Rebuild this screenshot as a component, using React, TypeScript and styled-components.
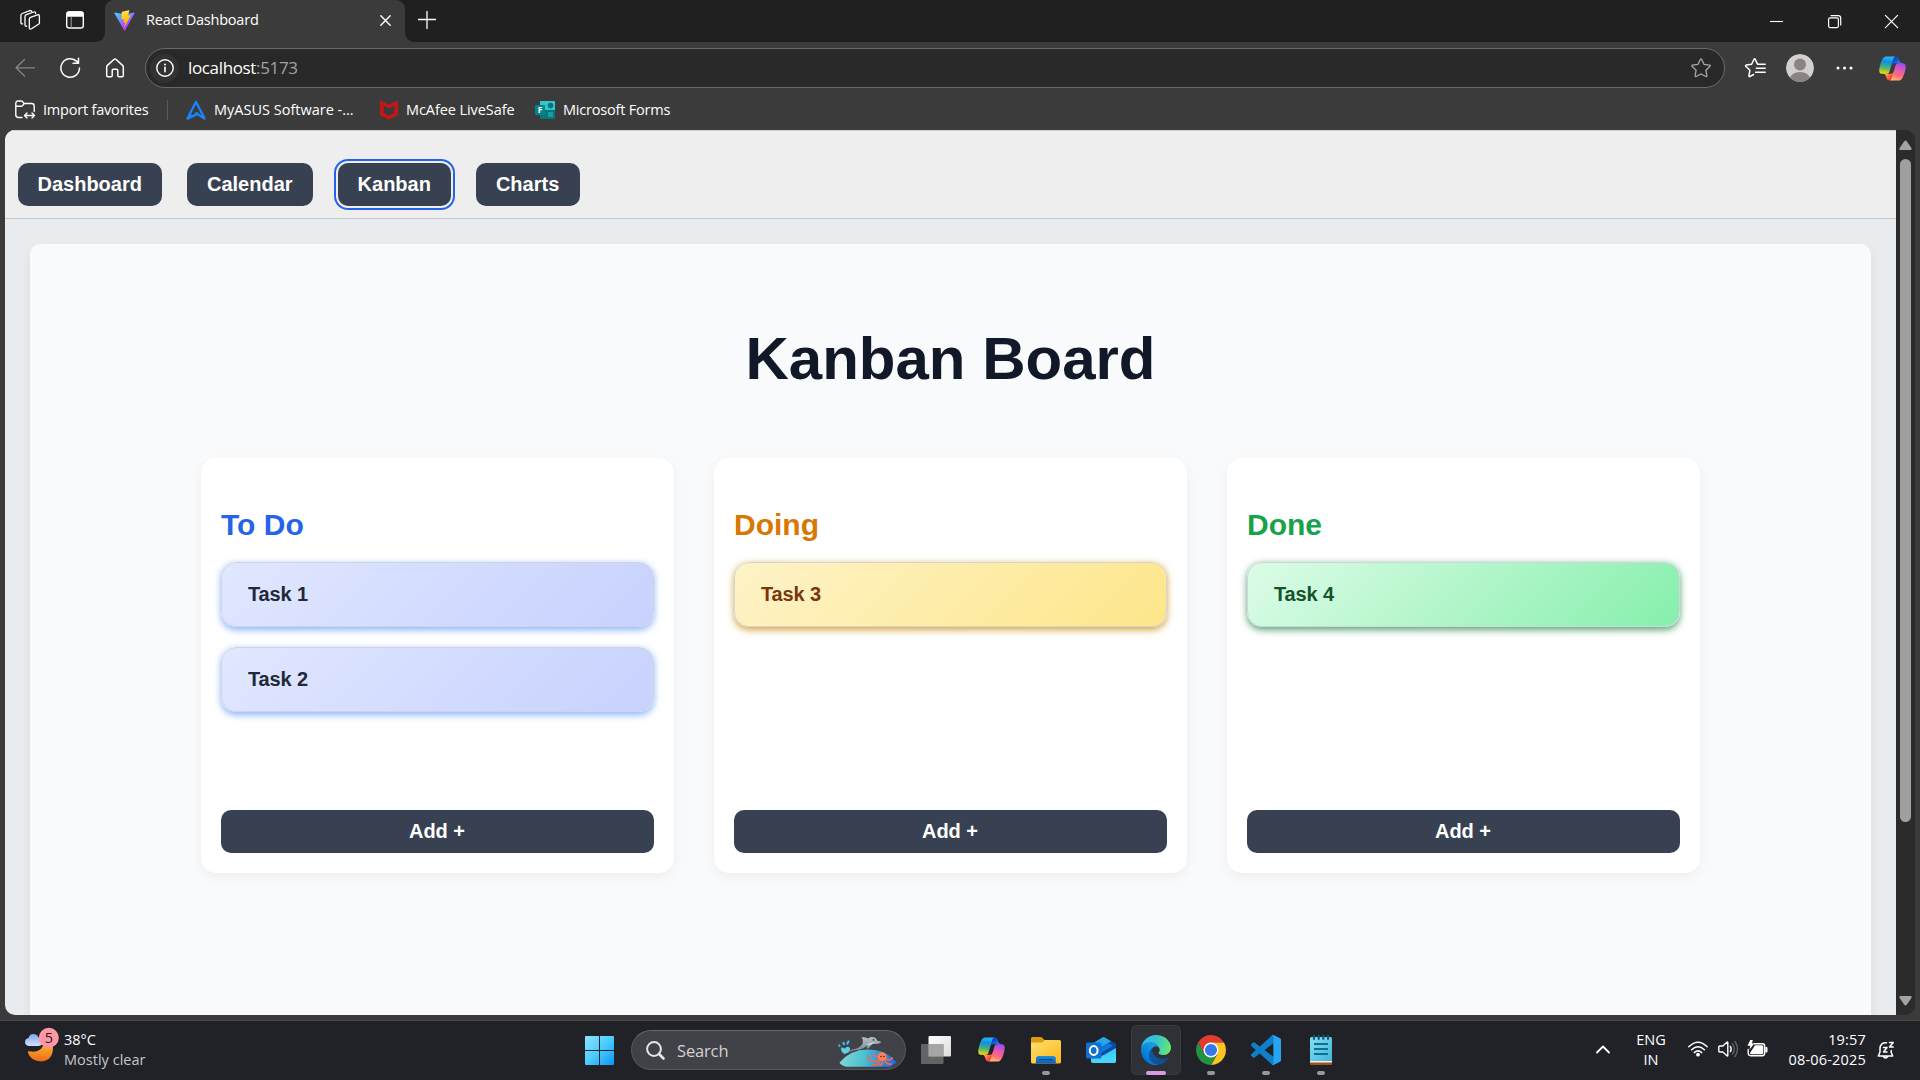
import React from "react";
import styled, { createGlobalStyle } from "styled-components";

const UI_FONT = `"Open Sans", "Noto Sans", sans-serif`;
const PAGE_FONT = `"Liberation Sans", Arial, sans-serif`;

const GlobalStyle = createGlobalStyle`
  *, *::before, *::after { box-sizing: border-box; }
  html, body { margin: 0; padding: 0; background: #3b3b3b; }
  body { width: 1920px; height: 1080px; overflow: hidden; }
  svg { display: block; flex: none; overflow: visible; }
`;

const Desktop = styled.div`
  width: 1920px;
  height: 1080px;
  display: flex;
  flex-direction: column;
  font-family: ${UI_FONT};
  color: #fff;
`;

/* ---------- Browser chrome ---------- */

const Browser = styled.div`
  height: 1021px;
  display: flex;
  flex-direction: column;
  background: #3b3b3b;
  border-bottom: 1px solid #484848;
`;

const TabStrip = styled.div`
  height: 42px;
  display: flex;
  background: #202020;
`;

const StripActions = styled.div`
  width: 105px;
  height: 42px;
  padding: 10px 0 0 20px;
  display: flex;
  gap: 25px;
  background: #202020;
  border-bottom-right-radius: 9px;
`;

const TabBacking = styled.div<{ $grow?: boolean }>`
  flex: ${(p) => (p.$grow ? "1" : "none")};
  display: flex;
  background: #3b3b3b;
`;

const TabCorners = styled.div`
  background: #202020;
`;

const Tab = styled.div`
  width: 300px;
  height: 42px;
  padding: 0 14px 2px 9px;
  display: flex;
  align-items: center;
  background: #3b3b3b;
  border-radius: 9px 9px 0 0;
`;

const TabTitle = styled.span`
  flex: 1;
  margin-left: 11px;
  font-size: 14.5px;
  letter-spacing: -0.22px;
  line-height: 20px;
  white-space: nowrap;
`;

const StripRest = styled.div`
  flex: 1;
  height: 42px;
  padding: 11px 22px 0 13px;
  display: flex;
  justify-content: space-between;
  background: #202020;
  border-bottom-left-radius: 9px;
`;

const WindowControls = styled.div`
  display: flex;
  gap: 44.5px;
  padding-top: 4px;
`;

const Toolbar = styled.div`
  height: 52px;
  padding: 6px 13px 0 14px;
  display: flex;
  align-items: flex-start;
`;

const NavIcons = styled.div`
  width: 131px;
  height: 40px;
  display: flex;
  align-items: center;
  gap: 23.5px;
`;

const AddressBar = styled.div`
  width: 1580px;
  height: 40px;
  padding: 0 13px 0 5px;
  display: flex;
  align-items: center;
  background: #292929;
  border: 1px solid #6a6a6a;
  border-radius: 20px;
`;

const InfoBadge = styled.span`
  width: 29px;
  height: 29px;
  display: grid;
  place-items: center;
  background: #323232;
  border-radius: 50%;
  margin-left: -1px;
`;

const Url = styled.span`
  flex: 1;
  margin-left: 9px;
  font-size: 17px;
  letter-spacing: -0.35px;
  line-height: 24px;
`;

const Port = styled.span`
  color: #a3a3a3;
`;

const ToolbarRight = styled.div`
  flex: 1;
  height: 40px;
  padding-left: 20px;
  display: grid;
  grid-template-columns: 41px 50px 42px 29px;
  align-items: center;
`;

const FavoritesBar = styled.div`
  height: 36px;
  padding: 1px 0 5px 15px;
  display: flex;
  align-items: center;
`;

const Favorite = styled.span<{ $width: number; $gap: number; $track: number }>`
  width: ${(p) => p.$width}px;
  display: flex;
  align-items: center;
  gap: ${(p) => p.$gap}px;
  font-size: 14.5px;
  letter-spacing: ${(p) => p.$track}px;
  line-height: 20px;
  white-space: nowrap;
`;

const Divider = styled.span`
  width: 1px;
  height: 20px;
  margin-right: 18px;
  background: #5a5a5a;
`;

/* ---------- Page viewport ---------- */

const Viewport = styled.div`
  width: 1910px;
  height: 885px;
  margin-left: 5px;
  display: flex;
  overflow: hidden;
  border-radius: 10px;
  background: #2b2b2b;
`;

const Page = styled.div`
  width: 1891px;
  height: 885px;
  overflow: hidden;
  background: #e8ecef;
  font-family: ${PAGE_FONT};
`;

const PageNav = styled.nav`
  height: 89px;
  padding: 32px 13px 0;
  display: flex;
  gap: 25px;
  background: #eee;
  border-top: 1px solid #cfcfcf;
  border-bottom: 1px solid #c8c9ca;
`;

const DarkButton = styled.button<{ $focused?: boolean }>`
  height: 43px;
  padding: 0 20.5px 0 19.5px;
  border: 0;
  border-radius: 10px;
  background: #374151;
  color: #fff;
  font: 600 20px/23px ${PAGE_FONT};
  outline: ${(p) => (p.$focused ? "2px solid #2563eb" : "none")};
  outline-offset: 2px;
`;

const Panel = styled.main`
  height: 900px;
  margin: 25px 25px 0;
  padding: 80px 170px 0;
  display: flex;
  flex-direction: column;
  align-items: center;
  background: #f9fafc;
  border-radius: 10px;
  box-shadow: 0 4px 12px rgba(0, 0, 0, 0.05);
`;

const Title = styled.h1`
  margin: 0 0 65px;
  font-size: 60px;
  line-height: 69px;
  font-weight: 700;
  color: #111827;
`;

const Board = styled.div`
  width: 1499px;
  display: grid;
  grid-template-columns: repeat(3, 473px);
  gap: 40px;
`;

const Column = styled.section`
  height: 415px;
  padding: 49px 20px 20px;
  display: flex;
  flex-direction: column;
  background: #fff;
  border-radius: 15px;
  box-shadow: 0 4px 12px rgba(0, 0, 0, 0.05);
`;

const ColumnTitle = styled.h2<{ $color: string }>`
  margin: 0 0 19px;
  font-size: 30px;
  line-height: 36px;
  font-weight: 600;
  color: ${(p) => p.$color};
`;

const TaskList = styled.div`
  flex: 1;
  display: flex;
  flex-direction: column;
  gap: 20px;
`;

const Task = styled.div<{ $from: string; $to: string; $ink: string; $glow: string }>`
  height: 65px;
  padding: 0 26px 1px;
  display: flex;
  align-items: center;
  font-size: 20px;
  letter-spacing: -0.15px;
  font-weight: 600;
  color: ${(p) => p.$ink};
  background: linear-gradient(135deg, ${(p) => p.$from}, ${(p) => p.$to});
  border: 1px solid #d1d5db;
  border-radius: 15px;
  box-shadow: 0 2.5px 7.5px ${(p) => p.$glow};
`;

const Scrollbar = styled.div`
  width: 19px;
  height: 885px;
  padding: 10px 3px 9px;
  display: flex;
  flex-direction: column;
  align-items: center;
  background: #2b2b2b;
`;

const Thumb = styled.div`
  width: 11px;
  height: 663px;
  margin-top: 9px;
  margin-bottom: auto;
  border-radius: 6px;
  background: #9f9f9f;
`;

/* ---------- Taskbar ---------- */

const Taskbar = styled.footer`
  height: 59px;
  display: flex;
  background: #202228;
`;

const Weather = styled.div`
  width: 574px;
  padding: 9px 0 0 25px;
  display: flex;
  gap: 9px;
`;

const WeatherText = styled.div`
  display: flex;
  flex-direction: column;
  font-size: 14.5px;
  letter-spacing: 0.02px;
  line-height: 20px;
  color: #c6c7c9;
`;

const Temperature = styled.span`
  color: #fff;
`;

const AppRow = styled.div`
  height: 59px;
  padding-top: 4px;
  display: flex;
  gap: 5px;
`;

const AppTile = styled.div<{ $active?: boolean; $top?: number }>`
  width: 50px;
  height: 50px;
  padding-top: ${(p) => p.$top ?? 10}px;
  display: flex;
  flex-direction: column;
  align-items: center;
  justify-content: space-between;
  border-radius: 6px;
  background: ${(p) => (p.$active ? "#2f3137" : "transparent")};
  box-shadow: ${(p) => (p.$active ? "inset 0 0 0 1px #393b41" : "none")};
`;

const Running = styled.span<{ $active?: boolean }>`
  width: ${(p) => (p.$active ? 20 : 8)}px;
  height: 4px;
  border-radius: 2px;
  background: ${(p) => (p.$active ? "#d79be2" : "#97989b")};
`;

const SearchBox = styled.div`
  width: 275px;
  height: 40px;
  margin: 5px 0 0 2px;
  padding: 0 8px 0 14px;
  display: flex;
  align-items: center;
  border: 1px solid #55565b;
  border-top-color: #66676c;
  border-radius: 20px;
  background: #414247;
`;

const SearchLabel = styled.span`
  flex: 1;
  margin: 1px 0 0 12px;
  font-size: 16.5px;
  letter-spacing: -0.15px;
  line-height: 24px;
  color: #d2d2d4;
`;

const SearchHighlight = styled.span`
  padding-top: 4px;
`;

const Tray = styled.div`
  margin-left: auto;
  padding-right: 25px;
  display: flex;
  align-items: flex-start;
`;

const TrayIcons = styled.div`
  width: 80px;
  margin: 19px 1px 0 10px;
  display: flex;
  align-items: center;
  justify-content: space-between;
`;

const TrayText = styled.div`
  padding-top: 9px;
  display: flex;
  flex-direction: column;
  font-size: 14.5px;
  line-height: 20px;
  white-space: nowrap;
`;

const Language = styled(TrayText)`
  width: 54px;
  margin-left: 14px;
  text-align: center;
`;

const Clock = styled(TrayText)`
  width: 97px;
  text-align: right;
  letter-spacing: 0.18px;
`;

const ChevronSlot = styled.div`
  padding-top: 24px;
`;

const BellSlot = styled.div`
  padding: 20px 0 0 11px;
`;

/* ---------- Icons ---------- */

const stroke = {
  fill: "none",
  stroke: "#fff",
  strokeWidth: 1.4,
  strokeLinecap: "round" as const,
  strokeLinejoin: "round" as const,
};

const WorkspacesIcon = () => (
  <svg width="20" height="20" viewBox="0 0 20 20" {...stroke} strokeWidth={1.3}>
    <path d="M9.300 9.200q0-1.300 1.200-1.800l7-2.600q1.900-.5 1.900 1.300v6.600q0 1-.9 1.600l-7 4.400q-2.200 1.200-2.200-1.100z" />
    <path d="M15.600 3.600V3q-.2-1.500-1.800-1L6.300 4.600Q5 5.100 5 6.400v8.400q.1 1.700 1.700 1.400" />
    <path d="M11.800 1.500Q11.300.2 9.800.7L2.200 3.500Q.9 4 .9 5.300v7.300Q1 14.200 2.600 13.900" />
  </svg>
);

const PaneIcon = () => (
  <svg width="20" height="20" viewBox="0 0 20 20">
    <rect x="1.700" y="2" width="16.600" height="16" rx="2.600" {...stroke} />
    <path d="M1.300 6.800V4.200Q1.300 1.300 4.200 1.300h11.600q2.900 0 2.900 2.900v2.600z" fill="#fff" />
    <path d="M6.200 7v10.500" stroke="#8d8d8d" strokeWidth="1.200" />
  </svg>
);

const ViteIcon = () => (
  <svg width="21" height="21" viewBox="1.500 1.500 29 29">
    <defs>
      <linearGradient id="viteA" x1="6" x2="20" y1="3" y2="26" gradientUnits="userSpaceOnUse">
        <stop stopColor="#41d1ff" />
        <stop offset="1" stopColor="#bd34fe" />
      </linearGradient>
      <linearGradient id="viteB" x1="17" x2="20" y1="3" y2="22" gradientUnits="userSpaceOnUse">
        <stop stopColor="#ffea83" />
        <stop offset=".1" stopColor="#ffdd35" />
        <stop offset="1" stopColor="#ffa800" />
      </linearGradient>
    </defs>
    <path fill="url(#viteA)" d="M29.8836 6.146L16.7418 29.6457c-.2714.4851-.9684.488-1.2439.0052L2.0956 6.1482c-.3-.5262.1498-1.1635.746-1.057l13.156 2.3516a.7144.7144 0 0 0 .2537-.0004l12.8808-2.3478c.5942-.1083 1.0463.5241.7515 1.0513Z" />
    <path fill="url(#viteB)" d="M22.2644 2.0069l-9.7253 1.9056a.3571.3571 0 0 0-.2879.3294l-.5982 10.1038c-.014.238.2045.4227.4367.3691l2.7077-.6248c.2534-.0585.4823.1647.4302.4194l-.8044 3.9393c-.0542.265.1947.4918.4536.4132l1.6724-.5082c.2593-.0787.5084.1487.4536.414l-1.2784 6.1877c-.08.387.4348.598.6495.2662L16.900 24 24.442 9.1848c.1327-.2648-.096-.5667-.387-.5106l-2.787.5379c-.262.0505-.4849-.1934-.4109-.4497l1.8191-6.306c.0741-.2568-.1496-.5009-.4118-.4495Z" />
  </svg>
);

const CloseTabIcon = () => (
  <svg width="11" height="11" viewBox="0 0 11 11" {...stroke}>
    <path d="M.8.8l9.400 9.400M10.200.8L.8 10.200" />
  </svg>
);

const PlusIcon = () => (
  <svg width="18" height="18" viewBox="0 0 18 18" {...stroke} strokeWidth={1.300}>
    <path d="M9 .5v17M.5 8.500h17" />
  </svg>
);

const MinimizeIcon = () => (
  <svg width="13" height="13" viewBox="0 0 13 13">
    <path d="M0 6.500h13" stroke="#fff" strokeWidth="1.100" />
  </svg>
);

const RestoreIcon = () => (
  <svg width="13" height="13" viewBox="0 0 13 13" {...stroke} strokeWidth={1.200}>
    <rect x=".6" y="2.800" width="9.800" height="9.800" rx="1.500" />
    <path d="M3 .6h7.200q2.500 0 2.500 2.500V10" />
  </svg>
);

const CloseWindowIcon = () => (
  <svg width="13" height="13" viewBox="0 0 13 13" {...stroke} strokeWidth={1.200}>
    <path d="M.4.4l12.200 12.200M12.600.4L.4 12.600" />
  </svg>
);

const BackIcon = () => (
  <svg width="22" height="20" viewBox="0 0 22 20" {...stroke} stroke="#858585" strokeWidth={1.300}>
    <path d="M10.500 1.500L2 9.800 10.500 18M2 9.800h18.500" />
  </svg>
);

const RefreshIcon = () => (
  <svg width="22" height="22" viewBox="0 0 22 22" {...stroke} strokeWidth={1.500}>
    <path d="M19.500 11A9.300 9.300 0 1 1 16.800 4.400L18.300 5.900M18.500 1.200v5h-5.400" />
  </svg>
);

const HomeIcon = () => (
  <svg width="20" height="20" viewBox="0 0 20 20" {...stroke} strokeWidth={1.500}>
    <path d="M1.700 8.900q0-.9.700-1.500L8.900 1.500q1.100-.9 2.200 0l6.500 5.900q.7.600.7 1.500v8.600q0 1.300-1.300 1.300h-3q-1.200 0-1.200-1.300v-5q0-1.200-1.200-1.200H8.400q-1.200 0-1.200 1.200v5q0 1.300-1.200 1.300H3q-1.300 0-1.300-1.300z" />
  </svg>
);

const InfoIcon = () => (
  <svg width="18" height="18" viewBox="0 0 18 18" {...stroke}>
    <circle cx="9" cy="9" r="8.200" />
    <path d="M9 8.200v4.500" strokeWidth="1.600" />
    <circle cx="9" cy="5.500" r="1" fill="#fff" stroke="none" />
  </svg>
);

const StarIcon = () => (
  <svg width="20" height="20" viewBox="0 0 20 20" {...stroke} stroke="#a9a9a9" strokeWidth={1.300}>
    <path d="M9.400 1.300q.6-.9 1.200 0l2.400 5 5.600.8q1 .3.400 1.100l-4.100 4 1 5.600q0 1.100-1 .7L10 16l-4.900 2.500q-1 .4-1-.7l1-5.600L1 8.200q-.6-.8.400-1.100L7 6.300z" />
  </svg>
);

const FavoritesIcon = () => (
  <svg width="21" height="20" viewBox="0 0 21 20" {...stroke} strokeWidth={1.500}>
    <path d="M12.600 6.200L10.200 1.300q-.6-.9-1.200 0l-2.400 5L1.200 7.100q-1 .3-.4 1.100l4.100 4-1 5.600q0 1.100 1 .7L8.600 16.500" />
    <path d="M12.800 6.300h7.400M11.400 10.300h8.800M10.600 14.300h9.600" />
  </svg>
);

const AvatarIcon = () => (
  <svg width="28" height="28" viewBox="0 0 28 28">
    <defs>
      <clipPath id="avatarClip">
        <circle cx="14" cy="14" r="14" />
      </clipPath>
    </defs>
    <g clipPath="url(#avatarClip)">
      <circle cx="14" cy="14" r="14" fill="#d2d0ce" />
      <circle cx="14" cy="10.500" r="6" fill="#8a8582" />
      <ellipse cx="14" cy="26" rx="10.500" ry="8" fill="#8a8582" />
    </g>
  </svg>
);

const MoreIcon = () => (
  <svg width="17" height="4" viewBox="0 0 17 4" fill="#fff">
    <circle cx="2" cy="2" r="1.500" />
    <circle cx="8.500" cy="2" r="1.500" />
    <circle cx="15" cy="2" r="1.500" />
  </svg>
);

const CopilotIcon = ({ id }: { id: string }) => (
  <svg width="29" height="29" viewBox="0 0 48 48">
    <defs>
      <linearGradient id={`${id}a`} x1="34" y1="18" x2="26" y2="5" gradientUnits="userSpaceOnUse">
        <stop stopColor="#1aa2ee" />
        <stop offset=".5" stopColor="#1557d8" />
        <stop offset="1" stopColor="#0d3fb8" />
      </linearGradient>
      <linearGradient id={`${id}b`} x1="12" y1="32" x2="24" y2="44" gradientUnits="userSpaceOnUse">
        <stop stopColor="#ffb657" />
        <stop offset=".5" stopColor="#ff5f3d" />
        <stop offset="1" stopColor="#d8323c" />
      </linearGradient>
      <linearGradient id={`${id}c`} x1="14" y1="4" x2="10" y2="33" gradientUnits="userSpaceOnUse">
        <stop stopColor="#2fb5f4" />
        <stop offset=".3" stopColor="#0d91e1" />
        <stop offset=".65" stopColor="#52b471" />
        <stop offset="1" stopColor="#ffdc00" />
      </linearGradient>
      <linearGradient id={`${id}d`} x1="40" y1="14" x2="30" y2="44" gradientUnits="userSpaceOnUse">
        <stop stopColor="#8c48ff" />
        <stop offset=".4" stopColor="#e256b8" />
        <stop offset=".72" stopColor="#ff6c7c" />
        <stop offset="1" stopColor="#ffb66b" />
      </linearGradient>
    </defs>
    <path fill={`url(#${id}a)`} d="M34.142 7.325A4.630 4.630 0 0 0 29.700 4h-1.350a4.630 4.630 0 0 0-4.554 3.794L21.480 20.407l.575-1.965a4.630 4.630 0 0 1 4.444-3.330h7.853l3.294 1.282 3.175-1.283h-.926a4.630 4.630 0 0 1-4.443-3.325z" />
    <path fill={`url(#${id}b)`} d="M14.330 40.656A4.630 4.630 0 0 0 18.779 44h2.870a4.630 4.630 0 0 0 4.629-4.510l.312-12.163-.654 2.233a4.630 4.630 0 0 1-4.443 3.329h-7.919l-2.823-1.532-3.057 1.532h.912a4.630 4.630 0 0 1 4.447 3.344z" />
    <path fill={`url(#${id}c)`} d="M29.500 4H13.460c-4.583 0-7.332 6.057-9.165 12.113-2.172 7.176-5.015 16.772 3.208 16.772h6.926c2.079 0 3.904-1.375 4.475-3.373 1.210-4.235 3.330-11.620 4.996-17.244.846-2.858 1.551-5.313 2.633-6.842C27.140 4.570 28.150 4 29.500 4" />
    <path fill={`url(#${id}d)`} d="M18.498 44h16.040c4.582 0 7.332-6.058 9.165-12.115 2.171-7.177 5.014-16.775-3.208-16.775h-6.926c-2.080 0-3.905 1.376-4.475 3.374-1.210 4.236-3.330 11.622-4.996 17.247-.847 2.859-1.552 5.314-2.634 6.843C20.857 43.431 19.848 44 18.498 44" />
  </svg>
);

const ImportIcon = () => (
  <svg width="20" height="20" viewBox="0 0 20 20" {...stroke} strokeWidth={1.400}>
    <path d="M7 17.500H3.400Q.8 17.500.8 14.800V3.500Q.8 1 3.100 1h3.200q.8 0 1.300.6l1.500 1.900h7.500q2.600 0 2.600 2.700V11.500" />
    <path d="M1 6.200h5.300q.8 0 1.300-.6l1.500-2" />
    <path d="M9.700 15.500h9.300M12 13l-2.500 2.500L12 18M17 13l2.500 2.500L17 18" />
  </svg>
);

const AsusIcon = () => (
  <svg width="20" height="20" viewBox="0 0 20 20" fill="none" stroke="#1a84fb" strokeWidth="2.300" strokeLinejoin="round">
    <path d="M5.200 14.200L1.500 18.600 10 1.800l8.500 16.800L9.200 12.600" />
    <path d="M1.500 18.600l11.200-5.200" />
  </svg>
);

const McAfeeIcon = () => (
  <svg width="18" height="20" viewBox="0 0 18 20">
    <path fill="#c01818" fillRule="evenodd" d="M0 .3l9 4.200 9-4.200v14.900l-9 4.600-9-4.600zM3.800 5.800v7.100L9 15.600l5.200-2.700V5.800L9 8.400z" />
  </svg>
);

const FormsIcon = () => (
  <svg width="20" height="18" viewBox="0 0 20 18">
    <rect x="5" y="0" width="15" height="18" rx="1" fill="#03787c" />
    <path d="M6 0h13q1 0 1 1v8H5V1q0-1 1-1z" fill="#36c5cc" />
    <circle cx="15.500" cy="4.600" r="2.800" fill="#03787c" />
    <rect x="13" y="11" width="5" height="5" fill="#1a9ba1" />
    <rect x="0" y="4" width="10" height="10" rx="1" fill="#02848a" />
    <text x="5" y="12" textAnchor="middle" fontFamily="Open Sans" fontWeight="700" fontSize="8.500" letterSpacing="0" fill="#fff">F</text>
  </svg>
);

const ArrowIcon = ({ down }: { down?: boolean }) => (
  <svg width="13" height="10" viewBox="0 0 13 10">
    <path
      transform={down ? "rotate(180 6.500 5)" : undefined}
      d="M5.300 1.200q1.200-1.600 2.400 0l4.700 6.700q.9 2-.8 2H1.400q-1.700 0-.8-2z"
      fill="#a3a3a3"
    />
  </svg>
);

const WeatherIcon = () => (
  <svg width="30" height="38" viewBox="0 0 30 38">
    <defs>
      <linearGradient id="moon" x1="0" y1="0" x2="0" y2="1">
        <stop stopColor="#ffc23c" />
        <stop offset="1" stopColor="#ee6a14" />
      </linearGradient>
      <linearGradient id="cloud" x1="0" y1="0" x2="0" y2="1">
        <stop stopColor="#7ea6ef" />
        <stop offset="1" stopColor="#d3e0fb" />
      </linearGradient>
    </defs>
    <path d="M2.900 22.500q-.3-1.500 1.200-1.200 8 1.700 12.500-3 2.500-3 2.400-7.500l2.500.2Q27.800 12 28 18.500 27.500 30.500 16.500 31.500 5.500 31.200 2.900 22.500z" fill="url(#moon)" />
    <path d="M4 16q-4-.4-4-4 .2-3.400 3.600-4Q4.500 4 8.500 4q3.700.1 5 3.500 4 .4 4.500 4-.2 4.200-4.500 4.500z" fill="url(#cloud)" />
    <circle cx="23.800" cy="7.700" r="10" fill="#ff96a4" />
    <text x="23.800" y="13" textAnchor="middle" fontFamily="Open Sans" fontSize="14.500" fill="#222">5</text>
  </svg>
);

const StartIcon = () => (
  <svg width="29" height="29" viewBox="0 0 29 29">
    <defs>
      <linearGradient id="win" x1="0" y1="0" x2="29" y2="29" gradientUnits="userSpaceOnUse">
        <stop stopColor="#8fe3ff" />
        <stop offset=".5" stopColor="#4accfd" />
        <stop offset="1" stopColor="#0b95f8" />
      </linearGradient>
    </defs>
    <path fill="url(#win)" d="M1 0h13v14H0V1q0-1 1-1zM15 0h13q1 0 1 1v13H15zM0 15h14v14H1q-1 0-1-1zM15 15h14v13q0 1-1 1H15z" />
  </svg>
);

const SearchIcon = () => (
  <svg width="19" height="19" viewBox="0 0 19 19" fill="none" stroke="#e6e6e8" strokeWidth="2" strokeLinecap="round">
    <circle cx="8" cy="8" r="6.900" />
    <path d="M13 13l4.500 4.500" strokeWidth="2.600" />
  </svg>
);

const DolphinIcon = () => (
  <svg width="60" height="32" viewBox="0 0 60 32">
    <defs>
      <linearGradient id="sea" x1="0" y1="0" x2="60" y2="10" gradientUnits="userSpaceOnUse">
        <stop stopColor="#8fded8" />
        <stop offset=".5" stopColor="#4cc0cf" />
        <stop offset=".8" stopColor="#2a88e4" />
        <stop offset="1" stopColor="#1f70e6" />
      </linearGradient>
      <linearGradient id="skin" x1="0" y1="0" x2="0" y2="1">
        <stop stopColor="#b4c2c6" />
        <stop offset="1" stopColor="#6f858c" />
      </linearGradient>
    </defs>
    <path d="M2.500 26.500Q14 13.500 30 13.500 49 13.500 59.500 26.500L53 30.800H9Q4 29.500 2.500 26.500z" fill="url(#sea)" />
    <path d="M2.200 9.500l.2.200M5 12.500l.2.200M11.500 5.500l-1.200 2M6.500 7l.5 1.200" stroke="#36bfe4" strokeWidth="2.200" strokeLinecap="round" />
    <path d="M4 14q1.500-3.500 4-1.300Q10 9 13 12q.8 4.500-5.500 6Q4.500 16.500 4 14z" fill="#5bd0ea" />
    <path d="M11 16.800q1-3 5-3.600 6-.4 9.500-5.200Q26.500 3.200 24.500 1.300q4-.6 6.200 1.200Q34-.2 37.600 1.600q2.300 1.200 2.400 3l4 1.200q.4 1.200-1.500 1.400-4 1.200-7.500.8-1.500 3.600-5 5-.2-2 0-3.600-4.500 4.300-11.500 4.600-4 .4-7.500 2.800z" fill="url(#skin)" />
    <path d="M29.500 8q5-.2 8.500-2.200l-3 2.500q-4 .9-5.500-.3z" fill="#dfe8ea" />
    <circle cx="36.500" cy="3.900" r=".8" fill="#233" />
    <path d="M42.500 23q-4.500 4-9 1.500-3.500-1.500-2.500-4.500M43 25q-3 5-7 4M45.500 24q.5 4.500-2.500 5M48 24q1 4.500 6 4M49 22.500q4 3 6-.5M41.500 21.500q-3-2.500-5.500-2" fill="none" stroke="#f0694c" strokeWidth="1.800" strokeLinecap="round" />
    <ellipse cx="45.300" cy="20.500" rx="4.300" ry="4.300" fill="#ff8058" />
    <circle cx="44" cy="20.500" r=".8" fill="#5a1f1f" />
    <circle cx="47" cy="20.500" r=".8" fill="#5a1f1f" />
  </svg>
);

const TaskViewIcon = () => (
  <svg width="30" height="30" viewBox="0 0 30 30">
    <defs>
      <linearGradient id="tv" x1="0" y1="0" x2="1" y2="1">
        <stop stopColor="#fff" />
        <stop offset="1" stopColor="#dcdcdc" />
      </linearGradient>
    </defs>
    <rect x="7.500" y="1" width="22.500" height="20.500" rx="1" fill="url(#tv)" />
    <rect x="0" y="9" width="22.500" height="20" rx="1" fill="#737373" opacity=".82" />
    <path d="M7.500 9h15v12.500h-15z" fill="#a5a5a5" />
  </svg>
);

const ExplorerIcon = () => (
  <svg width="30" height="30" viewBox="0 0 30 30">
    <defs>
      <linearGradient id="folder" x1="0" y1="0" x2="1" y2="1">
        <stop stopColor="#ffdf70" />
        <stop offset="1" stopColor="#fbb917" />
      </linearGradient>
      <linearGradient id="dock" x1="0" y1="0" x2="0" y2="1">
        <stop stopColor="#1f8fdb" />
        <stop offset="1" stopColor="#0a60b4" />
      </linearGradient>
    </defs>
    <path d="M0 3.500Q0 2 1.500 2h8q1 0 1.700.7L14 5.500V12H0z" fill="#dd9b0c" />
    <path d="M0 7.500h10.500q1 0 1.800-.7L13.500 5H28.500Q30 5 30 6.500V27q0 1.500-1.500 1.500h-27Q0 28.500 0 27z" fill="url(#folder)" />
    <path d="M5 28.500v-5Q5 21 7.500 21h14.800q2.500 0 2.500 2.500v5z" fill="url(#dock)" />
    <path d="M8.500 24.700h13" stroke="#0a4b91" strokeWidth="1.200" strokeLinecap="round" />
  </svg>
);

const OutlookIcon = () => (
  <svg width="30" height="30" viewBox="0 0 30 30">
    <defs>
      <linearGradient id="olFront" x1="0" y1="0" x2="1" y2="1">
        <stop stopColor="#1fb5f0" />
        <stop offset="1" stopColor="#4fe0fb" />
      </linearGradient>
    </defs>
    <path d="M5 9.500L16.500 2.500q1-.6 2 0L29 8.500q1 .6 1 1.800V15L12 22 5 18z" fill="#1590e0" />
    <path d="M5 9.500L17 2.300q.6-.3 1.200 0L25 6.300 13 13.500H5z" fill="#2aa5ec" />
    <path d="M14 13L25 6.300l4 2.300q1 .6 1 1.900v3L15.500 22z" fill="#0d47a0" />
    <path d="M14 13l8-4.900 5 2.900L14 18.500z" fill="#0f78d6" />
    <path d="M5 20l11 1 14-8v12.500q0 2.500-2.500 2.500h-20Q5 28 5 25.500z" fill="url(#olFront)" />
    <path d="M5 24l12-3.500 13 6.500q-.8 1-2.500 1h-20Q5 28 5 25.500z" fill="#4ad3f8" />
    <rect x="0" y="7.500" width="15.500" height="16" rx="1.500" fill="#0f6fd3" />
    <ellipse cx="7.700" cy="15.500" rx="3.900" ry="4.400" fill="none" stroke="#fff" strokeWidth="2" />
  </svg>
);

const EdgeIcon = () => (
  <svg width="30" height="30" viewBox="0 0 256 256">
    <defs>
      <linearGradient id="edgeA" x1="58" x2="236" y1="177" y2="177" gradientUnits="userSpaceOnUse">
        <stop stopColor="#0c59a4" />
        <stop offset="1" stopColor="#114a8b" />
      </linearGradient>
      <linearGradient id="edgeB" x1="150" x2="42" y1="92" y2="210" gradientUnits="userSpaceOnUse">
        <stop stopColor="#1b9de2" />
        <stop offset=".3" stopColor="#1595df" />
        <stop offset="1" stopColor="#0078d4" />
      </linearGradient>
      <linearGradient id="edgeC" x1="20" x2="250" y1="50" y2="120" gradientUnits="userSpaceOnUse">
        <stop stopColor="#35b8ee" />
        <stop offset=".45" stopColor="#35c2cc" />
        <stop offset="1" stopColor="#66eb6e" />
      </linearGradient>
    </defs>
    <path fill="url(#edgeA)" d="M231 190.500c-3.400 1.800-6.900 3.400-10.500 4.700-11.500 4.300-23.600 6.500-35.900 6.500-47.300 0-88.500-32.500-88.500-74.300.1-11.400 6.400-21.900 16.400-27.300-42.800 1.800-53.800 46.400-53.800 72.500 0 73.900 68.100 81.400 82.800 81.400 7.900 0 19.800-2.300 27-4.600l1.300-.4c27.600-9.500 51-28.100 66.600-52.800 1.200-1.900.6-4.300-1.200-5.500-1.300-.8-2.900-.9-4.200-.2z" />
    <path fill="url(#edgeB)" d="M105.700 241.400c-8.900-5.500-16.600-12.800-22.700-21.300-26.300-36-18.400-86.500 17.600-112.800 3.800-2.700 7.700-5.200 11.900-7.200 3.100-1.500 8.400-4.100 15.500-4 10.100.1 19.600 4.900 25.700 13 4 5.400 6.300 11.900 6.400 18.700 0-.2 24.500-79.600-80-79.600-43.900 0-80 41.700-80 78.200-.2 19.300 4 38.500 12.100 56 27.600 58.800 94.800 87.600 156.400 67.100-21.100 6.600-44.100 3.700-62.900-8.100z" />
    <path fill="url(#edgeC)" d="M152.300 148.900c-.8 1-3.300 2.500-3.300 5.700 0 2.600 1.700 5.100 4.700 7.200 14.400 10 41.500 8.700 41.600 8.700 10.700 0 21.100-2.900 30.300-8.300 18.800-11 30.400-31.100 30.400-52.900.3-22.400-8-37.300-11.300-43.900C223.500 23.900 177.700 0 128 0 58 0 1 56.200 0 126.200c.5-36.500 36.800-66 80-66 3.500 0 23.500.3 42 10.100 16.300 8.600 24.900 18.900 30.800 29.200 6.200 10.700 7.300 24.100 7.300 29.500 0 5.300-2.700 13.300-7.800 19.900z" />
  </svg>
);

const ChromeIcon = () => (
  <svg width="30" height="30" viewBox="0 0 48 48">
    <path d="M24 12h20.780A24 24 0 0 0 3.220 12l10.390 18z" fill="#e33b2e" />
    <path d="M34.390 30L24 48A24 24 0 0 0 44.780 12H24z" fill="#fcc21f" />
    <path d="M13.610 30L3.220 12A24 24 0 0 0 24 48l10.390-18z" fill="#229342" />
    <circle cx="24" cy="24" r="12" fill="#fff" />
    <circle cx="24" cy="24" r="9.700" fill="#3478ea" />
  </svg>
);

const CodeIcon = () => (
  <svg width="30" height="30" viewBox="0 0 24 24">
    <path fill="#0f7fc9" d="M23.150 2.587L18.210.21a1.494 1.494 0 0 0-1.705.29l-9.460 8.630-4.120-3.128a.999.999 0 0 0-1.276.057L.327 7.261A1 1 0 0 0 .326 8.740L3.899 12 .326 15.260a1 1 0 0 0 .001 1.479L1.650 17.940a.999.999 0 0 0 1.276.057l4.120-3.128 9.460 8.630a1.492 1.492 0 0 0 1.704.29l4.942-2.377A1.500 1.500 0 0 0 24 20.060V3.939a1.500 1.500 0 0 0-.85-1.352zm-5.146 14.861L10.826 12l7.178-5.448v10.896z" />
    <path fill="#25a5f2" d="M16.505.5a1.494 1.494 0 0 1 1.705-.29l4.940 2.377A1.500 1.500 0 0 1 24 3.939V20.060a1.500 1.500 0 0 1-.848 1.352L18.210 23.790a1.492 1.492 0 0 1-1.704-.29q1.498.6 1.498-1.200V1.700Q18-.1 16.505.5z" />
  </svg>
);

const NotepadIcon = () => (
  <svg width="22" height="30" viewBox="0 0 22 30">
    <defs>
      <linearGradient id="pad" x1="0" y1="0" x2="1" y2="1">
        <stop stopColor="#84e0f3" />
        <stop offset="1" stopColor="#41b5d8" />
      </linearGradient>
    </defs>
    <rect x="0" y="23.500" width="22" height="6.500" rx="1" fill="#a4501b" />
    <rect x="0" y="22" width="22" height="5.500" fill="#f1f1ef" />
    <path d="M1.500 2h19Q22 2 22 3.500V26H0V3.500Q0 2 1.500 2z" fill="url(#pad)" />
    <path d="M4 .8v3M8.700.8v3M13.300.8v3M18 .8v3" stroke="#0f5878" strokeWidth="2.200" strokeLinecap="round" />
    <path d="M4 9h14M4 14h14M4 19h14" stroke="#0e6f96" strokeWidth="1.800" />
  </svg>
);

const ChevronIcon = () => (
  <svg width="14" height="9" viewBox="0 0 14 9" {...stroke} strokeWidth={1.800}>
    <path d="M1 7.500L7 1.500l6 6" />
  </svg>
);

const WifiIcon = () => (
  <svg width="20" height="16" viewBox="0 0 20 16" {...stroke} strokeWidth={1.500}>
    <path d="M.8 5.800Q10-3.400 19.200 5.800M3.600 8.800q6.400-6.200 12.800 0M6.300 11.600q3.700-3.400 7.400 0" />
    <circle cx="10" cy="13.700" r="1.900" fill="#fff" stroke="none" />
  </svg>
);

const VolumeIcon = () => (
  <svg width="20" height="18" viewBox="0 0 20 18" {...stroke}>
    <path d="M1.800 6h3L9 2.200q.8-.5.800.4v12.800q0 .9-.8.4L4.800 12h-3Q.8 12 .8 11V7q0-1 1-1z" />
    <path d="M12.300 6.300q1.800 2.700 0 5.400" />
    <path d="M14.500 3.800q3.600 5.200 0 10.400M17 1.500q5 7.500 0 15" stroke="#5f6166" />
  </svg>
);

const BatteryIcon = () => (
  <svg width="21" height="18" viewBox="0 0 21 18">
    <path d="M7 3.800h8.300q2.400 0 2.400 2.400v7.100q0 2.400-2.400 2.400H3.600q-2.400 0-2.400-2.400V9.500" {...stroke} />
    <path d="M8 5.300h6.800q1.500 0 1.500 1.500v5.900q0 1.500-1.500 1.500H4.200q-1.500 0-1-1.500z" fill="#fff" />
    <path d="M18.400 7h1q1.100 0 1.100 1v3.500q0 1-1.100 1h-1z" fill="#fff" />
    <path d="M3.200 0h2.600L5 3.400h2.200L2.600 9.500l.6-3.700H.5z" fill="#fff" />
  </svg>
);

const BellIcon = () => (
  <svg width="18" height="19" viewBox="0 0 18 19" {...stroke} strokeWidth={1.500}>
    <path d="M9.500 1.800Q3.200 1.500 3 7.500V11L1.300 15h14.400L14.200 11.500V9.500M6 15.300q2.500 3.600 5 0" />
    <path d="M6.500 6.500H10L6.500 11H10M12.500 1.500h3.700l-3.700 4.500h3.700" />
  </svg>
);

/* ---------- Data ---------- */

const columns = [
  {
    title: "To Do",
    color: "#2563eb",
    from: "#e0e7ff",
    to: "#c7d2fe",
    ink: "#1f2937",
    glow: "rgba(59, 130, 246, 0.6)",
    tasks: ["Task 1", "Task 2"],
  },
  {
    title: "Doing",
    color: "#d97706",
    from: "#fef3c7",
    to: "#fde68a",
    ink: "#78350f",
    glow: "rgba(202, 138, 4, 0.75)",
    tasks: ["Task 3"],
  },
  {
    title: "Done",
    color: "#16a34a",
    from: "#dcfce7",
    to: "#86efac",
    ink: "#14532d",
    glow: "rgba(21, 128, 61, 0.7)",
    tasks: ["Task 4"],
  },
];

const pages = ["Dashboard", "Calendar", "Kanban", "Charts"];

const apps = [
  { name: "taskview", icon: <TaskViewIcon /> },
  { name: "copilot", icon: <CopilotIcon id="tb" /> },
  { name: "explorer", icon: <ExplorerIcon />, running: true },
  { name: "outlook", icon: <OutlookIcon /> },
  { name: "edge", icon: <EdgeIcon />, running: true, active: true },
  { name: "chrome", icon: <ChromeIcon />, running: true },
  { name: "code", icon: <CodeIcon />, running: true },
  { name: "notepad", icon: <NotepadIcon />, running: true },
];

export default function App() {
  return (
    <Desktop>
      <GlobalStyle />
      <Browser>
        <TabStrip>
          <TabBacking>
            <StripActions>
              <WorkspacesIcon />
              <PaneIcon />
            </StripActions>
          </TabBacking>
          <TabCorners>
            <Tab>
              <ViteIcon />
              <TabTitle>React Dashboard</TabTitle>
              <CloseTabIcon />
            </Tab>
          </TabCorners>
          <TabBacking $grow>
            <StripRest>
              <PlusIcon />
              <WindowControls>
                <MinimizeIcon />
                <RestoreIcon />
                <CloseWindowIcon />
              </WindowControls>
            </StripRest>
          </TabBacking>
        </TabStrip>
        <Toolbar>
          <NavIcons>
            <BackIcon />
            <RefreshIcon />
            <HomeIcon />
          </NavIcons>
          <AddressBar>
            <InfoBadge>
              <InfoIcon />
            </InfoBadge>
            <Url>
              localhost<Port>:5173</Port>
            </Url>
            <StarIcon />
          </AddressBar>
          <ToolbarRight>
            <FavoritesIcon />
            <AvatarIcon />
            <MoreIcon />
            <CopilotIcon id="tool" />
          </ToolbarRight>
        </Toolbar>
        <FavoritesBar>
          <Favorite $width={152} $gap={8} $track={-0.2}>
            <ImportIcon />
            Import favorites
          </Favorite>
          <Divider />
          <Favorite $width={194} $gap={8} $track={0}>
            <AsusIcon />
            MyASUS Software -...
          </Favorite>
          <Favorite $width={155} $gap={8} $track={-0.08}>
            <McAfeeIcon />
            McAfee LiveSafe
          </Favorite>
          <Favorite $width={150} $gap={8} $track={-0.2}>
            <FormsIcon />
            Microsoft Forms
          </Favorite>
        </FavoritesBar>
        <Viewport>
          <Page>
            <PageNav>
              {pages.map((p) => (
                <DarkButton key={p} $focused={p === "Kanban"}>
                  {p}
                </DarkButton>
              ))}
            </PageNav>
            <Panel>
              <Title>Kanban Board</Title>
              <Board>
                {columns.map((c) => (
                  <Column key={c.title}>
                    <ColumnTitle $color={c.color}>{c.title}</ColumnTitle>
                    <TaskList>
                      {c.tasks.map((t) => (
                        <Task key={t} $from={c.from} $to={c.to} $ink={c.ink} $glow={c.glow}>
                          {t}
                        </Task>
                      ))}
                    </TaskList>
                    <DarkButton>Add +</DarkButton>
                  </Column>
                ))}
              </Board>
            </Panel>
          </Page>
          <Scrollbar>
            <ArrowIcon />
            <Thumb />
            <ArrowIcon down />
          </Scrollbar>
        </Viewport>
      </Browser>
      <Taskbar>
        <Weather>
          <WeatherIcon />
          <WeatherText>
            <Temperature>38°C</Temperature>
            <span>Mostly clear</span>
          </WeatherText>
        </Weather>
        <AppRow>
          <AppTile $top={11}>
            <StartIcon />
          </AppTile>
          <SearchBox>
            <SearchIcon />
            <SearchLabel>Search</SearchLabel>
            <SearchHighlight>
              <DolphinIcon />
            </SearchHighlight>
          </SearchBox>
          {apps.map((a) => (
            <AppTile key={a.name} $active={a.active}>
              {a.icon}
              {a.running && <Running $active={a.active} />}
            </AppTile>
          ))}
        </AppRow>
        <Tray>
          <ChevronSlot>
            <ChevronIcon />
          </ChevronSlot>
          <Language>
            <span>ENG</span>
            <span>IN</span>
          </Language>
          <TrayIcons>
            <WifiIcon />
            <VolumeIcon />
            <BatteryIcon />
          </TrayIcons>
          <Clock>
            <span>19:57</span>
            <span>08-06-2025</span>
          </Clock>
          <BellSlot>
            <BellIcon />
          </BellSlot>
        </Tray>
      </Taskbar>
    </Desktop>
  );
}
